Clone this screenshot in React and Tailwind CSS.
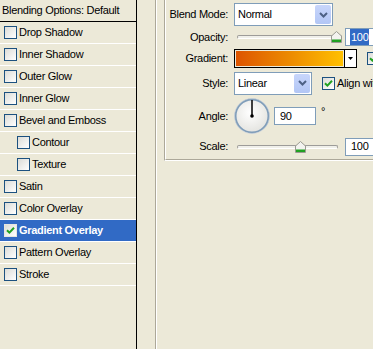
import React from 'react'

const effects = [
  { label: 'Drop Shadow' },
  { label: 'Inner Shadow' },
  { label: 'Outer Glow' },
  { label: 'Inner Glow' },
  { label: 'Bevel and Emboss' },
  { label: 'Contour', indent: true },
  { label: 'Texture', indent: true },
  { label: 'Satin' },
  { label: 'Color Overlay' },
  { label: 'Gradient Overlay', checked: true, selected: true },
  { label: 'Pattern Overlay' },
  { label: 'Stroke' },
]

function Checkbox({ checked, light }) {
  return (
    <span
      className={`w-[13px] h-[13px] shrink-0 border flex items-center justify-center bg-gradient-to-br from-[#dcdcd7] to-white ${
        light ? 'border-[#e6e6e0]' : 'border-[#1c5180]'
      }`}
    >
      {checked && (
        <svg width="9" height="9" viewBox="0 0 9 9">
          <path d="M1 4.2 L3.4 6.6 L8 1.8" fill="none" stroke="#21a121" strokeWidth="2" />
        </svg>
      )}
    </span>
  )
}

function Select({ value, width }) {
  return (
    <div className={`${width} h-[23px] border border-[#7f9db9] bg-white flex items-stretch`}>
      <span className="flex-1 flex items-center pl-[3px]">{value}</span>
      <span className="w-[16px] m-[1px] rounded-[2px] bg-gradient-to-b from-[#c8d6fb] to-[#b2c6f5] flex items-center justify-center">
        <svg width="9" height="6" viewBox="0 0 9 6">
          <path d="M1 1 L4.5 4.5 L8 1" fill="none" stroke="#4d6185" strokeWidth="2" />
        </svg>
      </span>
    </div>
  )
}

function Thumb() {
  return (
    <svg width="11" height="12" viewBox="0 0 11 12">
      <path d="M0.5 5 L5.5 0.5 L10.5 5 L10.5 11.5 L0.5 11.5 Z" fill="#f3f3ef" stroke="#9a9a90" />
      <rect x="1" y="8.5" width="9" height="2.5" fill="#21a121" />
    </svg>
  )
}

function Slider({ width, pos }) {
  return (
    <div className={`${width} h-[14px] relative`}>
      <div className="absolute left-[3px] right-0 top-[5px] h-[4px] rounded-[2px] border border-[#9d9c99] border-b-white bg-[#f0f0ea]" />
      <div className="absolute top-[1px]" style={{ left: pos }}>
        <Thumb />
      </div>
    </div>
  )
}

function Input({ value, selected, width }) {
  return (
    <div className={`${width} h-[18px] shrink-0 border border-[#7f9db9] bg-white flex items-center pl-[4px]`}>
      <span className={selected ? 'bg-[#316ac5] text-white px-[1px]' : 'px-[1px]'}>{value}</span>
    </div>
  )
}

function Dial() {
  return (
    <svg width="36" height="36" viewBox="0 0 36 36" className="shrink-0">
      <defs>
        <radialGradient id="dialFill" cx="0.45" cy="0.4" r="0.6">
          <stop offset="0" stopColor="#ffffff" />
          <stop offset="1" stopColor="#e4e4e0" />
        </radialGradient>
      </defs>
      <circle cx="18" cy="18" r="16.5" fill="url(#dialFill)" stroke="#7f9db9" strokeWidth="2" />
      <circle cx="18" cy="18" r="17.5" fill="none" stroke="#c9d2df" strokeWidth="0.6" />
      <line x1="18" y1="18" x2="18" y2="2" stroke="#000" strokeWidth="1.5" />
      <circle cx="18" cy="18" r="1.8" fill="#000" />
    </svg>
  )
}

function Label({ children }) {
  return <span className="w-[62px] shrink-0 text-right mr-[6px]">{children}</span>
}

export default function App() {
  return (
    <div className="w-[373px] h-[349px] overflow-hidden bg-[#ece9d8] flex font-['Liberation_Sans',Arial,sans-serif] text-[11px] tracking-[-0.3px] text-black">
      <div className="w-[137px] shrink-0 border-r border-black flex flex-col">
        <div className="h-[22px] border-b border-black pl-[2px] flex items-center">Blending Options: Default</div>
        {effects.map((e) => (
          <div
            key={e.label}
            className={`h-[22px] border-b border-white flex items-center gap-[1px] ${e.indent ? 'pl-[17px]' : 'pl-[4px]'} ${
              e.selected ? 'bg-[#316ac5] text-white font-bold' : ''
            }`}
          >
            <Checkbox checked={e.checked} light={e.selected} />
            <span className="ml-[1px]">{e.label}</span>
          </div>
        ))}
      </div>

      <div className="flex-1 pl-[18px] min-w-0">
        <div className="h-full border-l border-[#aca899]">
          <div className="h-full border-l border-white pl-[7px]">
            <div className="w-[260px] h-[161px] border-l border-b border-l-[#aca899] border-b-white">
              <div className="h-full border-l border-b border-l-white border-b-[#aca899] flex flex-col pt-[3px] whitespace-nowrap">
                <div className="h-[23px] flex items-center">
                  <Label>Blend Mode:</Label>
                  <Select value="Normal" width="w-[99px]" />
                </div>
                <div className="h-[22px] flex items-center">
                  <Label>Opacity:</Label>
                  <Slider width="w-[108px]" pos="97px" />
                  <span className="w-[3px]" />
                  <Input value="100" selected width="w-[42px]" />
                </div>
                <div className="h-[21px] flex items-center">
                  <Label>Gradient:</Label>
                  <div className="w-[123px] h-[19px] border border-black flex">
                    <div className="flex-1 m-[1px] bg-gradient-to-r from-[#dd5400] via-[#ec8a00] to-[#ffc000]" />
                    <div className="w-[12px] border-l border-black bg-white flex items-center justify-center">
                      <svg width="5" height="3" viewBox="0 0 5 3">
                        <path d="M0 0 L5 0 L2.5 3 Z" fill="#000" />
                      </svg>
                    </div>
                  </div>
                  <span className="ml-[10px]">
                    <Checkbox checked />
                  </span>
                </div>
                <div className="h-[28px] flex items-center">
                  <Label>Style:</Label>
                  <Select value="Linear" width="w-[78px]" />
                  <span className="ml-[10px]">
                    <Checkbox checked />
                  </span>
                  <span className="ml-[2px]">Align with layer</span>
                </div>
                <div className="h-[38px] flex items-center">
                  <Label>Angle:</Label>
                  <Dial />
                  <span className="w-[4px]" />
                  <Input value="90" width="w-[42px]" />
                  <span className="ml-[5px] self-start mt-[9px] leading-none">°</span>
                </div>
                <div className="h-[23px] flex items-center">
                  <Label>Scale:</Label>
                  <Slider width="w-[104px]" pos="61px" />
                  <span className="w-[7px]" />
                  <Input value="100" width="w-[42px]" />
                </div>
              </div>
            </div>
          </div>
        </div>
      </div>
    </div>
  )
}
